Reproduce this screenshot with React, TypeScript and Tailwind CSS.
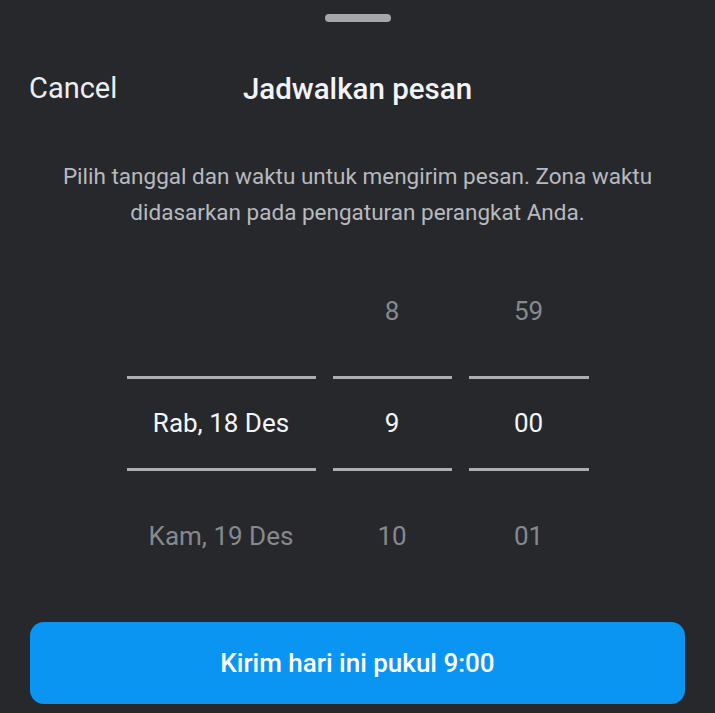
import React from 'react';

interface PickerColumn {
  width: string;
  above: string;
  selected: string;
  below: string;
}

const columns: PickerColumn[] = [
  { width: 'w-[189px]', above: '', selected: 'Rab, 18 Des', below: 'Kam, 19 Des' },
  { width: 'w-[119px]', above: '8', selected: '9', below: '10' },
  { width: 'w-[120px]', above: '59', selected: '00', below: '01' },
];

export default function App() {
  return (
    <div className="h-[713px] w-full overflow-hidden bg-[#26282c] font-['Roboto',sans-serif] text-white">
      {/* Drag handle */}
      <div className="flex justify-center pt-[14px]">
        <div className="h-[8px] w-[66px] rounded-full bg-[#a3a6ab]" />
      </div>

      {/* Header */}
      <div className="mt-[37px] grid h-[60px] grid-cols-[1fr_auto_1fr] items-center">
        <button type="button" className="justify-self-start pl-[29px] text-[29px] text-[#eceef0]">
          Cancel
        </button>
        <h1 className="text-[29.5px] font-medium text-[#f2f3f5]">Jadwalkan pesan</h1>
        <div />
      </div>

      {/* Description */}
      <p className="mx-auto mt-[39px] max-w-[640px] text-center text-[22.5px] leading-[36px] text-[#b7babf]">
        Pilih tanggal dan waktu untuk mengirim pesan. Zona waktu didasarkan pada pengaturan perangkat
        Anda.
      </p>

      {/* Date / time picker */}
      <div className="mt-[16px] flex justify-center gap-[17px]">
        {columns.map((col, i) => (
          <div key={i} className={`flex flex-col ${col.width}`}>
            <div className="flex h-[130px] items-center justify-center text-[26px] text-[#86898e]">
              {col.above}
            </div>
            <div className="h-[3px] bg-[#abaeb2]" />
            <div className="flex h-[89px] items-center justify-center text-[26px] text-[#f4f5f7]">
              {col.selected}
            </div>
            <div className="h-[3px] bg-[#abaeb2]" />
            <div className="flex h-[130px] items-center justify-center text-[26px] text-[#86898e]">
              {col.below}
            </div>
          </div>
        ))}
      </div>

      {/* Submit */}
      <div className="mt-[21px] px-[30px]">
        <button
          type="button"
          className="flex h-[82px] w-full items-center justify-center rounded-[14px] bg-[#0a95f3] text-[26px] font-medium text-white"
        >
          Kirim hari ini pukul 9:00
        </button>
      </div>
    </div>
  );
}
